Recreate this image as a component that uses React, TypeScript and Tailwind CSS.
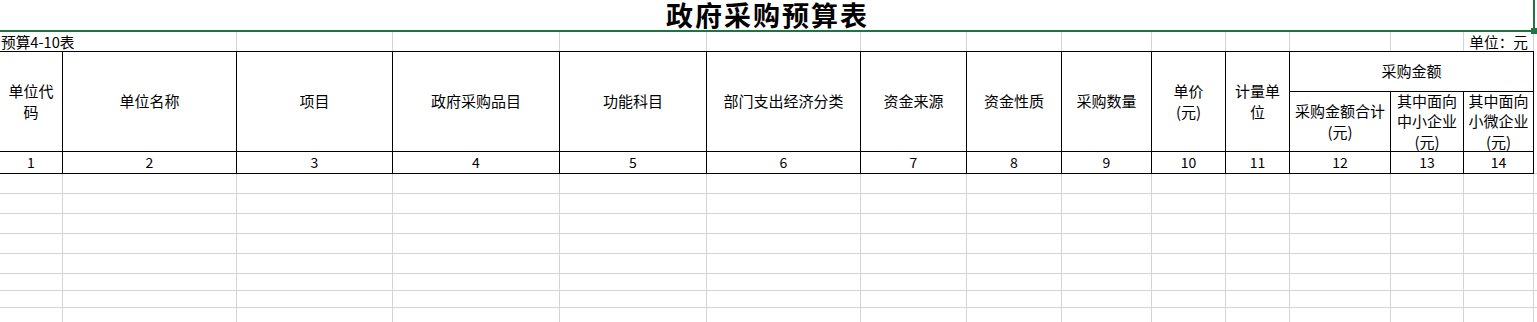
const cols = "grid-cols-[63px_174px_156px_167px_147px_154px_106px_95px_90px_74px_64px_101px_73px_70px_1fr]";

const headCols: string[][] = [
  ["单位代", "码"],
  ["单位名称"],
  ["项目"],
  ["政府采购品目"],
  ["功能科目"],
  ["部门支出经济分类"],
  ["资金来源"],
  ["资金性质"],
  ["采购数量"],
  ["单价", "(元)"],
  ["计量单", "位"],
];

const subCols: string[][] = [
  ["采购金额合计", "(元)"],
  ["其中面向", "中小企业", "(元)"],
  ["其中面向", "小微企业", "(元)"],
];

const bodyRows = ["h-[20px]", "h-[20px]", "h-[20px]", "h-[20px]", "h-[20px]", "h-[17px]", "h-[17px]", "h-[17px]"];

function Lines({ lines }: { lines: string[] }) {
  return (
    <div className="text-center leading-[20.5px]">
      {lines.map((l, i) => (
        <div key={i}>{l}</div>
      ))}
    </div>
  );
}

export default function App() {
  return (
    <div
      className="relative h-[322px] w-[1537px] overflow-hidden bg-white text-black"
      style={{ fontFamily: '"Noto Sans CJK SC", "Noto Sans", sans-serif' }}
    >
      {/* title row, selected */}
      <div className="flex h-[32px] w-[1535px] items-center justify-center border-r-2 border-b-2 border-[#217346]">
        <h1 className="pl-[2px] text-[27px] font-bold leading-[30px] tracking-[2px]">政府采购预算表</h1>
      </div>
      <div className="absolute left-[1531px] top-[28px] h-[6px] w-[6px] bg-[#217346]" />

      {/* sub title row */}
      <div className={`grid h-[19px] ${cols} text-[14.67px] leading-[19px]`}>
        <div className="col-span-2 flex border-r border-[#d4d4d4]">
          <span className="whitespace-nowrap pl-[1px]">预算4-10表</span>
        </div>
        {Array.from({ length: 11 }).map((_, i) => (
          <div key={i} className="border-r border-[#d4d4d4]" />
        ))}
        <div className="flex justify-end border-r border-[#d4d4d4] pr-[5px]">
          <span className="whitespace-nowrap">单位：元</span>
        </div>
        <div />
      </div>

      {/* header */}
      <div className={`grid ${cols} grid-rows-[41px_60px] text-[15px]`}>
        {headCols.map((lines, i) => (
          <div
            key={i}
            className="row-span-2 flex items-center justify-center border-t border-r border-b border-black"
          >
            <Lines lines={lines} />
          </div>
        ))}
        <div className="col-span-3 flex items-center justify-center border-t border-r border-b border-black">
          采购金额
        </div>
        <div className="row-span-2" />
        {subCols.map((lines, i) => (
          <div key={i} className="flex items-center justify-center border-r border-b border-black">
            <Lines lines={lines} />
          </div>
        ))}
      </div>

      {/* column numbers */}
      <div className={`grid h-[22px] ${cols} text-[14px]`}>
        {Array.from({ length: 14 }).map((_, i) => (
          <div key={i} className="flex items-center justify-center border-r border-b border-black">
            {i + 1}
          </div>
        ))}
        <div className="border-b border-[#d4d4d4]" />
      </div>

      {/* empty sheet rows */}
      {bodyRows.map((h, r) => (
        <div key={r} className={`grid ${h} ${cols}`}>
          {Array.from({ length: 14 }).map((_, i) => (
            <div key={i} className="border-r border-b border-[#d4d4d4]" />
          ))}
          <div className="border-b border-[#d4d4d4]" />
        </div>
      ))}
    </div>
  );
}
